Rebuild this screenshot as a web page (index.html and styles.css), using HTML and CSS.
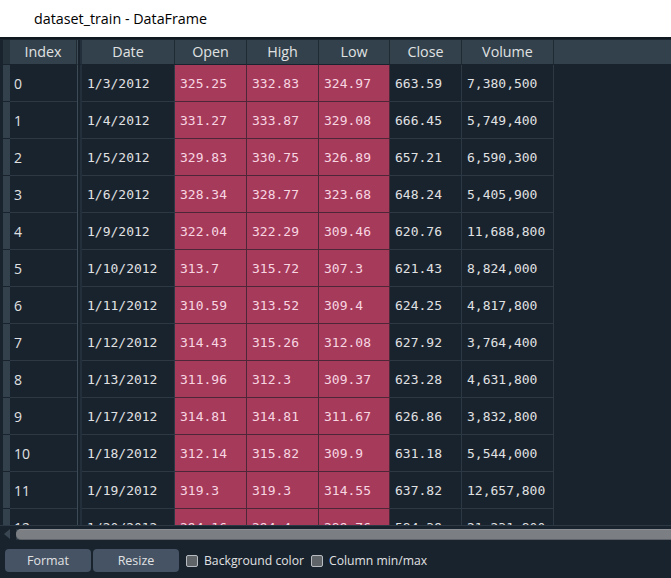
FILE: index.html
```html
<!DOCTYPE html>
<html>
<head>
<meta charset="utf-8">
<link rel="stylesheet" href="styles.css">
</head>
<body>
<div class="title">dataset_train - DataFrame</div>
<div class="panel">
  <div class="table-wrap">
    <div class="grid" id="grid">
      <div class="corner"></div>
      <div class="hd">Index</div>
      <div class="sep hsep"></div>
      <div class="hd">Date</div>
      <div class="hd">Open</div>
      <div class="hd">High</div>
      <div class="hd">Low</div>
      <div class="hd">Close</div>
      <div class="hd">Volume</div>
      <div class="hd fill"></div>
    </div>
  </div>
  <div class="hscroll">
    <div class="arrow"></div>
    <div class="groove"><div class="handle"></div></div>
  </div>
  <div class="toolbar">
    <button class="btn">Format</button>
    <button class="btn">Resize</button>
    <label class="chk"><span class="box"></span>Background color</label>
    <label class="chk"><span class="box"></span>Column min/max</label>
  </div>
</div>
<script>
const rows = [
 ["0","1/3/2012","325.25","332.83","324.97","663.59","7,380,500"],
 ["1","1/4/2012","331.27","333.87","329.08","666.45","5,749,400"],
 ["2","1/5/2012","329.83","330.75","326.89","657.21","6,590,300"],
 ["3","1/6/2012","328.34","328.77","323.68","648.24","5,405,900"],
 ["4","1/9/2012","322.04","322.29","309.46","620.76","11,688,800"],
 ["5","1/10/2012","313.7","315.72","307.3","621.43","8,824,000"],
 ["6","1/11/2012","310.59","313.52","309.4","624.25","4,817,800"],
 ["7","1/12/2012","314.43","315.26","312.08","627.92","3,764,400"],
 ["8","1/13/2012","311.96","312.3","309.37","623.28","4,631,800"],
 ["9","1/17/2012","314.81","314.81","311.67","626.86","3,832,800"],
 ["10","1/18/2012","312.14","315.82","309.9","631.18","5,544,000"],
 ["11","1/19/2012","319.3","319.3","314.55","637.82","12,657,800"],
 ["12","1/20/2012","294.16","294.4","289.76","584.39","21,231,800"]
];
const g = document.getElementById('grid');
for (const r of rows) {
  let h = '<div class="rh"></div>';
  h += '<div class="cell idx">' + r[0] + '</div>';
  h += '<div class="sep"></div>';
  h += '<div class="cell mono">' + r[1] + '</div>';
  for (let i = 2; i <= 4; i++) h += '<div class="cell mono pink">' + r[i] + '</div>';
  h += '<div class="cell mono">' + r[5] + '</div>';
  h += '<div class="cell mono">' + r[6] + '</div>';
  h += '<div class="empty"></div>';
  g.insertAdjacentHTML('beforeend', h);
}
</script>
</body>
</html>
```

FILE: styles.css
```css
html, body {
  margin: 0;
  padding: 0;
  background: #ffffff;
}
body {
  width: 671px;
  height: 578px;
  overflow: hidden;
  font-family: "Open Sans", "Noto Sans", sans-serif;
}
.title {
  height: 37px;
  line-height: 37px;
  padding-left: 34px;
  font-size: 14.3px;
  color: #000;
  box-sizing: border-box;
}
.panel {
  background: #19232d;
  height: 541px;
  border-top: 2px solid #101820;
  box-sizing: border-box;
  padding-top: 1px;
  display: flex;
  flex-direction: column;
}
.table-wrap {
  height: 486px;
  overflow: hidden;
  padding-left: 3px;
}
.grid {
  display: grid;
  grid-template-columns: 7px 67px 5px 93px 72px 72px 71px 72px 92px 1fr;
  grid-auto-rows: 37px;
  grid-template-rows: 25px;
}
.corner {
  background: #26323c;
  border-bottom: 1px solid #19232d;
}
.hd {
  background: #32414b;
  color: #e0e1e3;
  font-size: 14.3px;
  text-align: center;
  line-height: 24px;
  border-right: 1px solid #1f2a33;
  border-bottom: 1px solid #19232d;
}
.hd.fill {
  border-right: none;
}
.sep {
  background: #19232d;
  border-left: 1px solid #3d4b56;
  border-right: 2px solid #232f3a;
  box-sizing: border-box;
}
.hsep {
  border-bottom: 1px solid #19232d;
}
.rh {
  background: #32414b;
  border-bottom: 1px solid #19232d;
}
.cell {
  color: #e0e1e3;
  padding-left: 5px;
  padding-top: 1px;
  line-height: 35px;
  border-right: 1px solid #2c3843;
  border-bottom: 1px solid #2c3843;
  white-space: nowrap;
  overflow: hidden;
}
.idx {
  font-size: 14px;
  padding-left: 4px;
  border-right: none;
}
.mono {
  font-family: "DejaVu Sans Mono", monospace;
  font-size: 13px;
}
.pink {
  background: #a63a5a;
  color: #f7d6e2;
  border-right: 1px solid #4d2638;
  border-bottom: 1px solid #4d2638;
}
.empty {
  background: #19232d;
}
.hscroll {
  height: 17px;
  display: flex;
  align-items: center;
  border-top: 1px solid #2c3843;
  box-sizing: border-box;
  padding-left: 4px;
}
.arrow {
  width: 0;
  height: 0;
  border-top: 5px solid transparent;
  border-bottom: 5px solid transparent;
  border-right: 6px solid #3a4752;
  margin-right: 6px;
}
.groove {
  flex: 1;
  height: 11px;
  background: #2b3742;
  display: flex;
}
.handle {
  flex: 1;
  background: #7b7f83;
  border-top: 1px solid #8a8e92;
  border-bottom: 1px solid #5d6368;
  border-radius: 5px 0 0 5px;
}
.toolbar {
  height: 35px;
  display: flex;
  align-items: center;
  padding-left: 5px;
  gap: 2px;
  padding-top: 1px;
}
.btn {
  width: 86px;
  height: 23px;
  background: #455364;
  color: #e0e1e3;
  border: none;
  border-radius: 4px;
  font-family: "Open Sans", "Noto Sans", sans-serif;
  font-size: 12.5px;
  padding: 0;
}
.chk {
  display: flex;
  align-items: center;
  color: #e0e1e3;
  font-size: 12.2px;
  margin-left: 5px;
}
.box {
  width: 10px;
  height: 10px;
  border: 1px solid #b8bcc0;
  background: #5f6468;
  border-radius: 2px;
  margin-right: 6px;
}
```
